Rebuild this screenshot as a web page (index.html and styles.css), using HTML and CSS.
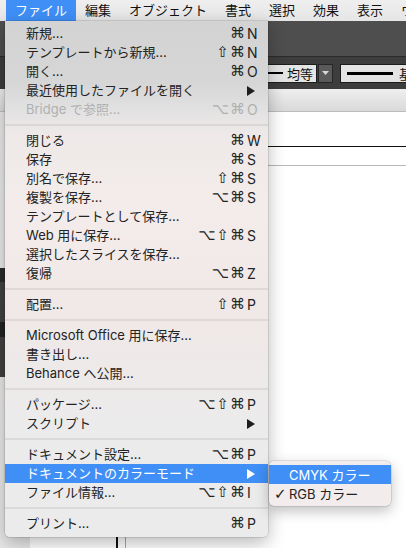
FILE: index.html
```html
<!DOCTYPE html>
<html lang="ja">
<head>
<meta charset="utf-8">
<title>ファイル メニュー</title>
<link rel="stylesheet" href="styles.css">
</head>
<body>
<div class="screen">
  <div class="menubar">
    <span class="mb-item active">ファイル</span>
    <span class="mb-item">編集</span>
    <span class="mb-item">オブジェクト</span>
    <span class="mb-item">書式</span>
    <span class="mb-item">選択</span>
    <span class="mb-item">効果</span>
    <span class="mb-item">表示</span>
    <span class="mb-item">ウ</span>
  </div>
  <div class="appbar-top"></div>
  <div class="controlbar">
    <div class="field short"><span class="stroke thin"></span><span class="field-text">均等</span></div>
    <div class="dropbtn"><svg width="7" height="4" viewBox="0 0 7 4"><polygon points="0,0 7,0 3.5,4" fill="#d8d8d8"/></svg></div>
    <div class="field long"><span class="stroke thick"></span><span class="field-text">基</span></div>
  </div>
  <div class="ruler"></div>
  <div class="workspace">
    <div class="side"><div class="dock"></div></div>
    <div class="canvas">
      <div class="art hline-black"></div>
      <div class="art hline-gray"></div>
      <div class="art vline-black"></div>
      <div class="art vline-gray"></div>
    </div>
  </div>

  <div class="menu">
    <div class="item"><span class="label">新規...</span><span class="mods">⌘</span><span class="key">N</span></div>
    <div class="item"><span class="label">テンプレートから新規...</span><span class="mods">⇧⌘</span><span class="key">N</span></div>
    <div class="item"><span class="label">開く...</span><span class="mods">⌘</span><span class="key">O</span></div>
    <div class="item"><span class="label">最近使用したファイルを開く</span><span class="key"><svg class="tri" width="8" height="10" viewBox="0 0 8 10"><polygon points="0,0 8,5 0,10"/></svg></span></div>
    <div class="item disabled"><span class="label">Bridge で参照...</span><span class="mods">⌥⌘</span><span class="key">O</span></div>
    <div class="sep"></div>
    <div class="item"><span class="label">閉じる</span><span class="mods">⌘</span><span class="key">W</span></div>
    <div class="item"><span class="label">保存</span><span class="mods">⌘</span><span class="key">S</span></div>
    <div class="item"><span class="label">別名で保存...</span><span class="mods">⇧⌘</span><span class="key">S</span></div>
    <div class="item"><span class="label">複製を保存...</span><span class="mods">⌥⌘</span><span class="key">S</span></div>
    <div class="item"><span class="label">テンプレートとして保存...</span></div>
    <div class="item"><span class="label">Web 用に保存...</span><span class="mods">⌥⇧⌘</span><span class="key">S</span></div>
    <div class="item"><span class="label">選択したスライスを保存...</span></div>
    <div class="item"><span class="label">復帰</span><span class="mods">⌥⌘</span><span class="key">Z</span></div>
    <div class="sep"></div>
    <div class="item"><span class="label">配置...</span><span class="mods">⇧⌘</span><span class="key">P</span></div>
    <div class="sep"></div>
    <div class="item"><span class="label">Microsoft Office 用に保存...</span></div>
    <div class="item"><span class="label">書き出し...</span></div>
    <div class="item"><span class="label">Behance へ公開...</span></div>
    <div class="sep"></div>
    <div class="item"><span class="label">パッケージ...</span><span class="mods">⌥⇧⌘</span><span class="key">P</span></div>
    <div class="item"><span class="label">スクリプト</span><span class="key"><svg class="tri" width="8" height="10" viewBox="0 0 8 10"><polygon points="0,0 8,5 0,10"/></svg></span></div>
    <div class="sep"></div>
    <div class="item"><span class="label">ドキュメント設定...</span><span class="mods">⌥⌘</span><span class="key">P</span></div>
    <div class="item hl"><span class="label">ドキュメントのカラーモード</span><span class="key"><svg class="tri" width="8" height="10" viewBox="0 0 8 10"><polygon points="0,0 8,5 0,10"/></svg></span></div>
    <div class="item"><span class="label">ファイル情報...</span><span class="mods">⌥⇧⌘</span><span class="key">I</span></div>
    <div class="sep"></div>
    <div class="item"><span class="label">プリント...</span><span class="mods">⌘</span><span class="key">P</span></div>
  </div>

  <div class="submenu">
    <div class="sub-item hl"><span class="check"></span><span>CMYK カラー</span></div>
    <div class="sub-item"><span class="check">✓</span><span>RGB カラー</span></div>
  </div>
</div>
</body>
</html>
```

FILE: styles.css
```css
html, body {
  margin: 0;
  padding: 0;
}

.screen {
  position: relative;
  width: 406px;
  height: 548px;
  overflow: hidden;
  background: #ffffff;
  font-family: "Inter", "Noto Sans CJK JP", sans-serif;
}

/* ---------- menu bar ---------- */
.menubar {
  display: flex;
  height: 21px;
  padding-left: 6px;
  background: linear-gradient(#efefef, #e5e5e5);
  font-size: 13px;
  color: #111;
  white-space: nowrap;
}

.mb-item {
  padding: 0 9px;
  line-height: 21px;
  flex: none;
}

.mb-item.active {
  background: #3f8ff6;
  color: #fff;
}

/* ---------- application bars ---------- */
.appbar-top {
  height: 35px;
  background: #4e4e4e;
  border-bottom: 1px solid #2b2b2b;
}

.controlbar {
  display: flex;
  align-items: center;
  height: 32px;
  padding-left: 220px;
  background: #3d3d3d;
  overflow: hidden;
}

.field {
  flex: none;
  box-sizing: border-box;
  display: flex;
  align-items: center;
  height: 19px;
  padding-left: 6px;
  background: #e4e4e4;
  border: 1px solid #1c1c1c;
  font-family: "Noto Sans CJK JP", sans-serif;
  font-size: 13px;
  color: #111;
  white-space: nowrap;
  overflow: hidden;
}

.field.short {
  width: 97px;
  gap: 4px;
}

.field.long {
  width: 120px;
  margin-left: 7px;
  gap: 6px;
}

.stroke {
  flex: none;
  background: #000;
}

.stroke.thin {
  width: 56px;
  height: 2px;
}

.stroke.thick {
  width: 46px;
  height: 3px;
}

.field-text {
  line-height: 17px;
}

.dropbtn {
  flex: none;
  box-sizing: border-box;
  width: 15px;
  height: 19px;
  margin-left: 1px;
  background: #5a5a5a;
  border: 1px solid #262626;
  display: flex;
  align-items: center;
  justify-content: center;
}

.ruler {
  height: 22px;
  background: linear-gradient(#efefef, #d9d9d9);
  border-bottom: 1px solid #bcbcbc;
}

/* ---------- workspace ---------- */
.workspace {
  display: flex;
  height: 436px;
}

.side {
  flex: none;
  width: 30px;
  background: #e8e8e8;
  display: flex;
  flex-direction: column;
}

.dock {
  margin-top: 156px;
  height: 109px;
  background: linear-gradient(#2a2a2a 0 14px, #414141 14px 54px, #222 54px 69px, #414141 69px 109px);
}

.canvas {
  position: relative;
  flex: 1;
  background: #fff;
}

.art {
  position: absolute;
}

.hline-black {
  top: 34px;
  left: 0;
  right: 0;
  height: 1px;
  background: #111;
}

.hline-gray {
  top: 53px;
  left: 0;
  right: 0;
  height: 1px;
  background: #b8b8b8;
}

.vline-black {
  top: 34px;
  bottom: 0;
  left: 86px;
  width: 2px;
  background: #111;
}

.vline-gray {
  top: 53px;
  bottom: 0;
  left: 95px;
  width: 1px;
  background: #a8a8a8;
}

/* ---------- dropdown menu ---------- */
.menu {
  position: absolute;
  left: 5px;
  top: 21px;
  width: 263px;
  padding: 3px 0 4px;
  border-radius: 0 0 5px 5px;
  background: linear-gradient(180deg,
      #d3d3d3 0px,
      #d6d6d6 62px,
      #e2e1e1 88px,
      #eee9e8 112px,
      #f3eceb 190px,
      #efe8e7 300px,
      #ecebeb 400px,
      #ebebeb 516px);
  box-shadow: 0 0 0 0.5px rgba(0, 0, 0, 0.2), 0 6px 18px rgba(0, 0, 0, 0.28);
  font-size: 13px;
  color: #232323;
}

.item {
  display: flex;
  align-items: center;
  height: 19px;
  padding: 0 6px 0 21px;
  white-space: nowrap;
}

.label {
  flex: 1;
  line-height: 19px;
}

.mods {
  font-family: "DejaVu Sans", sans-serif;
  font-size: 15px;
  letter-spacing: 1px;
  line-height: 19px;
  text-align: right;
}

.key {
  flex: none;
  width: 15px;
  padding-left: 1px;
  font-size: 14px;
  display: flex;
  align-items: center;
}

.tri {
  fill: #1e1e1e;
}

.item.hl {
  background: #3f8ff6;
  color: #fff;
}

.item.hl .tri {
  fill: #fff;
}

.item.disabled {
  color: #b0b0b0;
}

.sep {
  height: 2px;
  margin: 5px 0;
  background: rgba(0, 0, 0, 0.07);
}

/* ---------- submenu ---------- */
.submenu {
  position: absolute;
  left: 269px;
  top: 461px;
  width: 122px;
  padding: 4px 0 3px;
  border-radius: 5px;
  background: #f2ecec;
  box-shadow: 0 0 0 0.5px rgba(0, 0, 0, 0.18), 0 5px 14px rgba(0, 0, 0, 0.25);
  font-size: 13px;
  color: #232323;
}

.sub-item {
  display: flex;
  align-items: center;
  height: 19px;
  padding-left: 5px;
  white-space: nowrap;
}

.sub-item.hl {
  background: #3f8ff6;
  color: #fff;
}

.check {
  flex: none;
  width: 15px;
  font-family: "DejaVu Sans", sans-serif;
  font-size: 15px;
  font-weight: bold;
}
```
